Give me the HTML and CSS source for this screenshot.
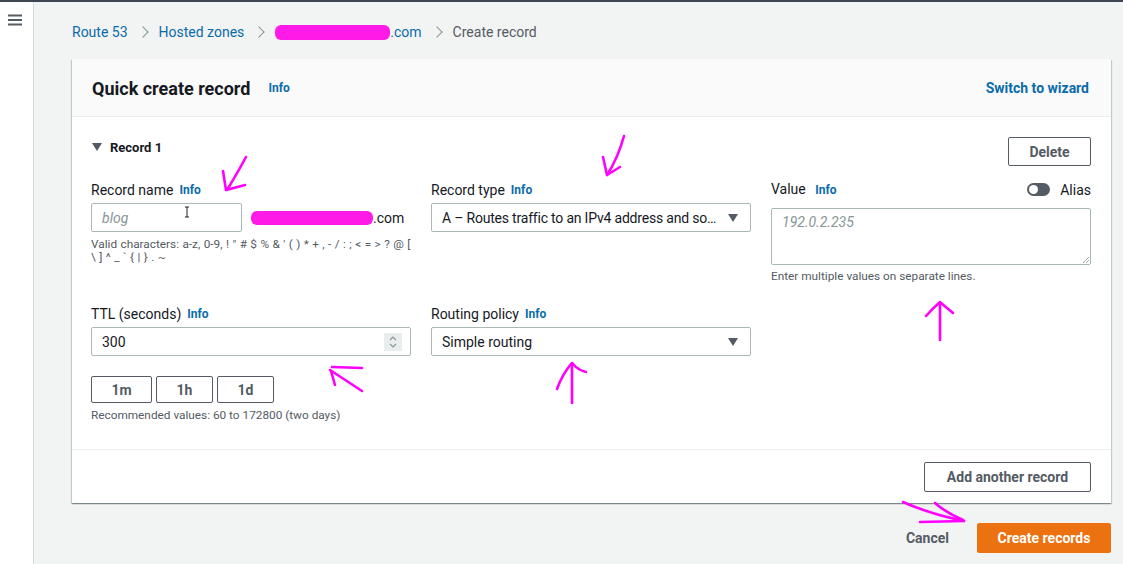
FILE: index.html
```html
<!DOCTYPE html>
<html lang="en">
<head>
<meta charset="utf-8">
<title>Quick create record</title>
<link rel="stylesheet" href="styles.css">
</head>
<body>
<div class="topline"></div>
<div class="layout">
  <aside class="sidebar">
    <svg class="burger" width="14" height="12" viewBox="0 0 14 12"><path d="M0 1.5H14M0 6H14M0 10.5H14" stroke="#545b64" stroke-width="1.8"/></svg>
  </aside>
  <main class="main">
    <nav class="crumbs">
      <a class="crumb-link">Route 53</a>
      <span class="chev"></span>
      <a class="crumb-link">Hosted zones</a>
      <span class="chev"></span>
      <a class="crumb-link"><span class="redact redact-crumb"></span>.com</a>
      <span class="chev"></span>
      <span class="crumb-current">Create record</span>
    </nav>

    <section class="card">
      <header class="card-head">
        <h1 class="card-title">Quick create record <span class="info info-title">Info</span></h1>
        <a class="wizard">Switch to wizard</a>
      </header>
      <div class="card-body">
        <div class="record-head">
          <div class="record-title"><span class="tri"></span>Record 1</div>
          <button class="btn btn-delete">Delete</button>
        </div>
        <div class="grid">
          <div class="field">
            <div class="label">Record name <span class="info">Info</span></div>
            <div class="name-row">
              <div class="input input-name"><span class="placeholder">blog</span></div>
              <span class="suffix"><span class="redact redact-name"></span>.com</span>
            </div>
            <div class="help help-chars">Valid characters: a-z, 0-9, ! " # $ % &amp; ' ( ) * + , - / : ; &lt; = &gt; ? @ [<br>\ ] ^ _ ` { | } . ~</div>
          </div>
          <div class="field">
            <div class="label">Record type <span class="info">Info</span></div>
            <div class="select"><span class="select-text select-type">A – Routes traffic to an IPv4 address and so…</span><span class="caret"></span></div>
          </div>
          <div class="field">
            <div class="label label-value"><span>Value <span class="info">Info</span></span><span class="alias"><span class="toggle"><span class="knob"></span></span>Alias</span></div>
            <div class="textarea"><span class="placeholder">192.0.2.235</span>
              <svg class="grip" width="7" height="7" viewBox="0 0 7 7"><path d="M7 1L1 7M7 4L4 7" stroke="#879596" stroke-width="0.8"/></svg>
            </div>
            <div class="help help-value">Enter multiple values on separate lines.</div>
          </div>
          <div class="field">
            <div class="label">TTL (seconds) <span class="info">Info</span></div>
            <div class="input input-ttl"><span>300</span>
              <span class="spinner"><svg width="8" height="14" viewBox="0 0 8 14"><path d="M1 5L4 2L7 5M1 9L4 12L7 9" fill="none" stroke="#879596" stroke-width="1.1"/></svg></span>
            </div>
            <div class="quick">
              <button class="btn btn-quick q-1m">1m</button>
              <button class="btn btn-quick q-1h">1h</button>
              <button class="btn btn-quick q-1d">1d</button>
            </div>
            <div class="help help-ttl">Recommended values: 60 to 172800 (two days)</div>
          </div>
          <div class="field">
            <div class="label">Routing policy <span class="info">Info</span></div>
            <div class="select"><span class="select-text">Simple routing</span><span class="caret"></span></div>
          </div>
        </div>
      </div>
      <footer class="card-foot">
        <button class="btn btn-add">Add another record</button>
      </footer>
    </section>

    <div class="actions">
      <button class="btn-link">Cancel</button>
      <button class="btn-primary">Create records</button>
    </div>
  </main>
</div>

<svg class="annot" width="1123" height="564" viewBox="0 0 1123 564">
  <g fill="none" stroke="#ff00ff" stroke-width="2.6" stroke-linecap="round" stroke-linejoin="round">
    <path d="M246 157 Q238 172 227 190"/>
    <path d="M223 171 L226 190 L245 185"/>
    <path d="M624 136 Q618 158 607 175"/>
    <path d="M603 157 L607 175 L620 167"/>
    <path d="M362 391 L330 370"/>
    <path d="M332 367 L362 368"/>
    <path d="M331 371 L335 385"/>
    <path d="M572 403 L572 363"/>
    <path d="M571 364 Q562 375 557 389"/>
    <path d="M573 364 Q578 370 586 372"/>
    <path d="M940 340 L940 302"/>
    <path d="M939 303 Q932 309 926 316"/>
    <path d="M941 303 Q947 308 953 313"/>
    <path d="M903 502 Q930 514 964 521"/>
    <path d="M935 503 Q945 512 963 520"/>
    <path d="M920 522 L964 521"/>
  </g>
  <path d="M185 207H189M187 207V217M185 217H189" fill="none" stroke="#222" stroke-width="1"/>
</svg>
</body>
</html>
```

FILE: styles.css
```css
* { box-sizing: border-box; }

html, body {
  margin: 0;
  padding: 0;
}

body {
  width: 1123px;
  height: 564px;
  overflow: hidden;
  background: #f2f3f3;
  font-family: Roboto, "Liberation Sans", Arial, sans-serif;
  color: #16191f;
  font-size: 14px;
  position: relative;
}

.topline {
  height: 2px;
  background: #3f4652;
}

.layout {
  display: flex;
  height: 562px;
}

.sidebar {
  width: 34px;
  flex: none;
  background: #ffffff;
  border-right: 1px solid #d5dbdb;
  padding: 12px 0 0 8px;
}

.burger { display: block; }

.main {
  flex: 1;
  padding: 20px 12px 0 38px;
}

/* breadcrumbs */
.crumbs {
  display: flex;
  align-items: center;
  height: 20px;
  line-height: 20px;
  font-size: 14px;
}

.crumb-link {
  color: #0a6bab;
  display: inline-flex;
  align-items: center;
}

.crumb-current { color: #545b64; }

.chev {
  width: 8px;
  height: 8px;
  border-right: 1.5px solid #879596;
  border-top: 1.5px solid #879596;
  transform: rotate(45deg);
  margin: 0 12px 0 11px;
}

.redact {
  display: inline-block;
  background: #ff1ae8;
  border-radius: 6px;
}

.redact-crumb {
  width: 115px;
  height: 15px;
}

.redact-name {
  width: 122px;
  height: 14px;
}

/* card */
.card {
  margin-top: 17px;
  background: #ffffff;
  box-shadow: 0 1px 1px 0 rgba(0, 28, 36, 0.3), 1px 1px 1px 0 rgba(0, 28, 36, 0.15), -1px 1px 1px 0 rgba(0, 28, 36, 0.15);
}

.card-head {
  height: 58px;
  background: #fafafa;
  border-bottom: 1px solid #eaeded;
  display: flex;
  align-items: center;
  justify-content: space-between;
  padding: 1px 20px 0 20px;
}

.card-title {
  margin: 0;
  font-size: 18px;
  font-weight: 700;
  display: flex;
  align-items: center;
}

.info {
  color: #0a6bab;
  font-size: 12px;
  font-weight: 700;
  margin-left: 6px;
}

.info-title { margin-left: 18px; }

.wizard {
  color: #0a6bab;
  font-size: 14px;
  font-weight: 700;
  margin-right: 2px;
}

.card-body {
  padding: 20px 20px 27px 19px;
}

.record-head {
  display: flex;
  align-items: flex-start;
  justify-content: space-between;
  height: 29px;
}

.record-title {
  display: flex;
  align-items: center;
  height: 20px;
  font-size: 13px;
  font-weight: 700;
}

.tri {
  width: 0;
  height: 0;
  border-left: 5px solid transparent;
  border-right: 5px solid transparent;
  border-top: 8px solid #545b64;
  margin: 0 8px 0 1px;
}

.btn {
  font-family: inherit;
  background: #ffffff;
  border: 1px solid #545b64;
  border-radius: 2px;
  color: #545b64;
  font-weight: 700;
  font-size: 14px;
  padding: 0;
  cursor: pointer;
}

.btn-delete {
  width: 83px;
  height: 29px;
}

/* grid */
.grid {
  margin-top: 13px;
  display: grid;
  grid-template-columns: repeat(3, 320px);
  column-gap: 20px;
  row-gap: 20px;
}

.label {
  height: 20px;
  line-height: 20px;
  font-size: 14px;
  display: flex;
  align-items: center;
  padding-top: 1px;
}

.label-value {
  justify-content: space-between;
}

.alias {
  display: flex;
  align-items: center;
  font-size: 14px;
}

.toggle {
  width: 23px;
  height: 13px;
  border-radius: 7px;
  background: #545b64;
  margin-right: 10px;
  display: flex;
  align-items: center;
  padding-left: 2px;
}

.knob {
  width: 9px;
  height: 9px;
  border-radius: 50%;
  background: #ffffff;
}

.input,
.select {
  margin-top: 4px;
  height: 29px;
  border: 1px solid #aab7b8;
  border-radius: 2px;
  display: flex;
  align-items: center;
  padding: 0 10px;
  font-size: 14px;
  background: #ffffff;
}

.name-row {
  display: flex;
  align-items: flex-end;
}

.input-name {
  width: 151px;
  flex: none;
}

.suffix {
  margin-left: 9px;
  display: flex;
  align-items: center;
  height: 29px;
  font-size: 14px;
}

.placeholder {
  color: #879596;
  font-style: italic;
}

.select {
  justify-content: space-between;
}

.select-text {
  white-space: nowrap;
  overflow: hidden;
}

.select-type {
  letter-spacing: -0.2px;
}

.caret {
  flex: none;
  width: 0;
  height: 0;
  border-left: 5px solid transparent;
  border-right: 5px solid transparent;
  border-top: 8px solid #545b64;
  margin-left: 8px;
  margin-right: 2px;
}

.textarea {
  margin-top: 9px;
  height: 57px;
  border: 1px solid #aab7b8;
  border-radius: 2px;
  padding: 5px 10px;
  position: relative;
  font-size: 14px;
}

.grip {
  position: absolute;
  right: 1px;
  bottom: 1px;
}

.help {
  color: #545b64;
  font-size: 11.8px;
  line-height: 12.5px;
}

.help-chars {
  margin-top: 6px;
  word-spacing: 0.5px;
  white-space: nowrap;
}

.help-value { margin-top: 5px; line-height: 13px; }

.input-ttl {
  justify-content: space-between;
  padding-right: 8px;
}

.spinner {
  width: 18px;
  height: 18px;
  background: #eaeded;
  display: flex;
  align-items: center;
  justify-content: center;
}

.quick {
  display: flex;
  gap: 4px;
  margin-top: 20px;
}

.btn-quick {
  height: 27px;
  width: 61px;
  font-size: 14px;
}

.q-1h, .q-1d { width: 57px; }

.help-ttl { margin-top: 6px; line-height: 13px; }

/* footer */
.card-foot {
  border-top: 1px solid #eaeded;
  padding: 12px 20px 11px 20px;
  display: flex;
  justify-content: flex-end;
}

.btn-add {
  width: 167px;
  height: 30px;
}

.actions {
  margin-top: 20px;
  display: flex;
  justify-content: flex-end;
  align-items: center;
  gap: 14px;
}

.btn-link {
  font-family: inherit;
  background: transparent;
  border: none;
  color: #545b64;
  font-weight: 700;
  font-size: 14px;
  padding: 0 14px;
  height: 30px;
}

.btn-primary {
  font-family: inherit;
  background: #ec7211;
  border: 1px solid #ec7211;
  border-radius: 2px;
  color: #ffffff;
  font-weight: 700;
  font-size: 14px;
  width: 134px;
  height: 30px;
  padding: 0;
}

.annot {
  position: absolute;
  left: 0;
  top: 0;
  pointer-events: none;
}
```
